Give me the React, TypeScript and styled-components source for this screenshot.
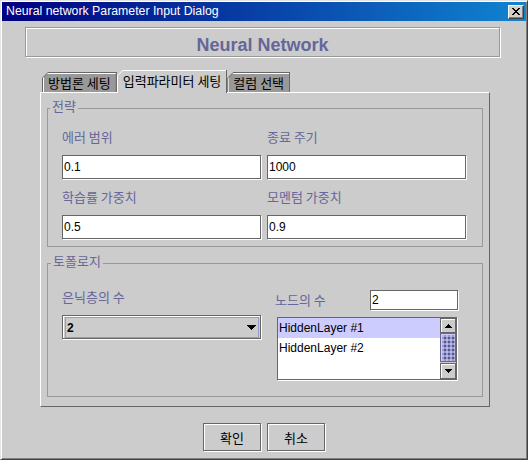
import React from "react";
import styled, { createGlobalStyle } from "styled-components";

const GlobalStyle = createGlobalStyle`
  html, body { margin: 0; padding: 0; background: #cccccc; }
  body { font-family: "Liberation Sans", "Noto Sans CJK KR", sans-serif; }
  * { box-sizing: border-box; }
`;

const KO = `"Noto Sans CJK KR", sans-serif`;

const Window = styled.div`
  width: 528px;
  height: 460px;
  background: #cccccc;
  border: 1px solid;
  border-color: #e4e4e4 #404040 #404040 #e4e4e4;
  box-shadow: inset 1px 1px 0 #ffffff, inset -1px -1px 0 #808080;
  padding: 1px;
  display: flex;
  flex-direction: column;
`;

const TitleBar = styled.div`
  height: 19px;
  flex: none;
  background: linear-gradient(to right, #000080, #1084d0);
  display: flex;
  align-items: center;
  justify-content: space-between;
  padding: 0 2px 0 4px;
`;

const TitleText = styled.span`
  color: #ffffff;
  font-size: 12.3px;
  line-height: 19px;
  white-space: nowrap;
`;

const CloseButton = styled.div`
  width: 16px;
  height: 14px;
  background: #d4d0c8;
  border: 1px solid;
  border-color: #ffffff #404040 #404040 #ffffff;
  box-shadow: inset -1px -1px 0 #808080;
  display: flex;
  align-items: center;
  justify-content: center;
  padding-right: 1px;
`;

const Header = styled.div`
  width: 475px;
  height: 30px;
  margin: 6px 0 0 23px;
  border: 1px solid #999999;
  box-shadow: inset 1px 1px 0 #ffffff, 1px 1px 0 #ffffff;
  padding-top: 7px;
  text-align: center;
  font-size: 18px;
  line-height: 21px;
  font-weight: bold;
  color: #666699;
`;

const TabbedPane = styled.div`
  margin: 13px 0 0 38px;
  width: 450px;
  display: flex;
  flex-direction: column;
`;

const TabStrip = styled.div`
  height: 22px;
  display: flex;
  align-items: flex-end;
  padding-left: 2px;
  position: relative;
  z-index: 1;
`;

const Tab = styled.div<{ $active?: boolean }>`
  height: ${(p) => (p.$active ? "23px" : "20px")};
  margin-bottom: ${(p) => (p.$active ? "-1px" : "0")};
  background: ${(p) => (p.$active ? "#ffffff" : "#666666")};
  box-shadow: inset -1px 0 0 #666666;
  padding: 1px 1px 0 1px;
  clip-path: polygon(0 6px, 6px 0, 100% 0, 100% 100%, 0 100%);
`;

const TabLabel = styled.div<{ $active?: boolean }>`
  height: 100%;
  background: ${(p) => (p.$active ? "#cccccc" : "#999999")};
  box-shadow: ${(p) => (p.$active ? "none" : "inset 1px 1px 0 #ffffff")};
  clip-path: polygon(0 5px, 5px 0, 100% 0, 100% 100%, 0 100%);
  padding: 0 5px ${(p) => (p.$active ? "3px" : "1px")} 5px;
  display: flex;
  align-items: center;
  font-family: ${KO};
  font-size: 13px;
  color: #000000;
  white-space: nowrap;
`;

const Panel = styled.div`
  height: 315px;
  border-top: 1px solid #ffffff;
  border-left: 1px solid #ffffff;
  border-right: 1px solid #666666;
  border-bottom: 1px solid #666666;
  padding: 6px 6px 0 6px;
  display: flex;
  flex-direction: column;
`;

const Group = styled.fieldset<{ $gapTop?: number; $padTop: number; $padBottom: number }>`
  margin: ${(p) => p.$gapTop ?? 0}px 0 0 0;
  padding: ${(p) => p.$padTop}px 0 ${(p) => p.$padBottom}px 0;
  border: 1px solid #999999;
  min-width: 0;
`;

const Legend = styled.legend<{ $indent: number }>`
  margin-left: ${(p) => p.$indent}px;
  padding: 0 2px 4px 2px;
  font-family: ${KO};
  font-size: 13px;
  line-height: 14px;
  color: #666699;
`;

const GroupBody = styled.div`
  padding: 0 14px;
`;

const FieldGrid = styled.div`
  display: grid;
  grid-template-columns: 199px 199px;
  column-gap: 6px;
  row-gap: 9px;
`;

const Cell = styled.div`
  display: flex;
  flex-direction: column;
`;

const Label = styled.span<{ $mb?: number }>`
  height: 18px;
  line-height: 18px;
  margin-bottom: ${(p) => p.$mb ?? 9}px;
  font-family: ${KO};
  font-size: 13px;
  color: #666699;
  white-space: nowrap;
`;

const TextField = styled.input<{ $w: number; $h: number }>`
  width: ${(p) => p.$w}px;
  height: ${(p) => p.$h}px;
  margin: 0;
  padding: 0 1px;
  border: 1px solid #666666;
  box-shadow: 1px 1px 0 #ffffff;
  background: #ffffff;
  color: #000000;
  font-family: "Liberation Sans", sans-serif;
  font-size: 12px;
  outline: none;
`;

const TopologyRow = styled.div`
  display: flex;
  gap: 13px;
`;

const LeftCol = styled.div`
  width: 200px;
  display: flex;
  flex-direction: column;
`;

const RightCol = styled.div`
  width: 183px;
  margin-top: 2px;
  display: flex;
  flex-direction: column;
`;

const NodeRow = styled.div`
  height: 20px;
  display: flex;
  align-items: center;
  justify-content: space-between;
`;

const Combo = styled.div`
  width: 199px;
  height: 24px;
  border: 1px solid #666666;
  box-shadow: 1px 1px 0 #ffffff, inset 1px 1px 0 #ffffff;
  padding: 1px 1px 0 2px;
  background: #cccccc;
`;

const ComboInner = styled.div`
  height: 21px;
  border: 1px solid #9999cc;
  display: flex;
  align-items: center;
  justify-content: space-between;
  padding: 0 2px 0 1px;
`;

const ComboValue = styled.span`
  font-family: "Liberation Sans", sans-serif;
  font-size: 12px;
  font-weight: bold;
  color: #000000;
`;

const List = styled.div`
  width: 180px;
  height: 63px;
  margin-left: 2px;
  margin-top: 7px;
  border: 1px solid #666666;
  box-shadow: 1px 1px 0 #ffffff;
  background: #ffffff;
  display: flex;
`;

const ListItems = styled.div`
  flex: 1;
  display: flex;
  flex-direction: column;
`;

const ListItem = styled.div<{ $selected?: boolean }>`
  height: 20px;
  line-height: 20px;
  padding-left: 1px;
  font-family: "Liberation Sans", sans-serif;
  font-size: 12px;
  color: #000000;
  background: ${(p) => (p.$selected ? "#ccccff" : "transparent")};
  white-space: nowrap;
`;

const ScrollBar = styled.div`
  width: 16px;
  display: flex;
  flex-direction: column;
  background: #cccccc;
`;

const ScrollButton = styled.div<{ $h: number }>`
  height: ${(p) => p.$h}px;
  flex: none;
  background: #cccccc;
  border: 1px solid #666666;
  box-shadow: inset 1px 1px 0 #ffffff;
  display: flex;
  align-items: center;
  justify-content: center;
`;

const Thumb = styled.div`
  height: 29px;
  flex: none;
  background-color: #9999cc;
  border: 1px solid #666699;
  box-shadow: inset 1px 1px 0 #ccccff;
  background-image: radial-gradient(circle, #ccccff 0.6px, transparent 0.9px),
    radial-gradient(circle, #333366 0.6px, transparent 0.9px);
  background-size: 4px 4px, 4px 4px;
  background-position: 0 0, 2px 2px;
`;

const Track = styled.div`
  flex: 1;
  background: #cccccc;
`;

const ButtonRow = styled.div`
  margin-top: 16px;
  display: flex;
  justify-content: center;
  gap: 6px;
`;

const Button = styled.div`
  width: 58px;
  height: 28px;
  border: 1px solid #666666;
  box-shadow: 1px 1px 0 #ffffff, inset 1px 1px 0 #ffffff;
  background: #cccccc;
  display: flex;
  align-items: center;
  justify-content: center;
  font-family: ${KO};
  font-size: 13px;
  color: #000000;
`;

const CloseIcon = () => (
  <svg width="8" height="7" viewBox="0 0 8 7" shapeRendering="crispEdges">
    <path d="M0 0h2v1H0zM6 0h2v1H6zM1 1h2v1H1zM5 1h2v1H5zM2 2h4v1H2zM3 3h2v1H3zM2 4h4v1H2zM1 5h2v1H1zM5 5h2v1H5zM0 6h2v1H0zM6 6h2v1H6z" fill="#000" />
  </svg>
);

const DownArrow = ({ w, h }: { w: number; h: number }) => (
  <svg width={w} height={h} viewBox={`0 0 ${w} ${h}`} shapeRendering="crispEdges">
    <polygon points={`0,0 ${w},0 ${w / 2},${h}`} fill="#000" />
  </svg>
);

const UpArrow = ({ w, h }: { w: number; h: number }) => (
  <svg width={w} height={h} viewBox={`0 0 ${w} ${h}`} shapeRendering="crispEdges">
    <polygon points={`0,${h} ${w},${h} ${w / 2},0`} fill="#000" />
  </svg>
);

export default function App() {
  return (
    <>
      <GlobalStyle />
      <Window>
        <TitleBar>
          <TitleText>Neural network Parameter Input Dialog</TitleText>
          <CloseButton>
            <CloseIcon />
          </CloseButton>
        </TitleBar>
        <Header>Neural Network</Header>
        <TabbedPane>
          <TabStrip>
            <Tab>
              <TabLabel>방법론 세팅</TabLabel>
            </Tab>
            <Tab $active>
              <TabLabel $active>입력파라미터 세팅</TabLabel>
            </Tab>
            <Tab>
              <TabLabel>컬럼 선택</TabLabel>
            </Tab>
          </TabStrip>
          <Panel>
            <Group $padTop={11} $padBottom={7}>
              <Legend $indent={2}>전략</Legend>
              <GroupBody>
                <FieldGrid>
                  <Cell>
                    <Label>에러 범위</Label>
                    <TextField $w={199} $h={24} value="0.1" readOnly />
                  </Cell>
                  <Cell>
                    <Label>종료 주기</Label>
                    <TextField $w={199} $h={24} value="1000" readOnly />
                  </Cell>
                  <Cell>
                    <Label>학습률 가중치</Label>
                    <TextField $w={199} $h={24} value="0.5" readOnly />
                  </Cell>
                  <Cell>
                    <Label>모멘텀 가중치</Label>
                    <TextField $w={199} $h={24} value="0.9" readOnly />
                  </Cell>
                </FieldGrid>
              </GroupBody>
            </Group>
            <Group $gapTop={7} $padTop={16} $padBottom={16}>
              <Legend $indent={3}>토폴로지</Legend>
              <GroupBody>
                <TopologyRow>
                  <LeftCol>
                    <Label>은닉층의 수</Label>
                    <Combo>
                      <ComboInner>
                        <ComboValue>2</ComboValue>
                        <DownArrow w={10} h={5} />
                      </ComboInner>
                    </Combo>
                  </LeftCol>
                  <RightCol>
                    <NodeRow>
                      <Label $mb={0}>노드의 수</Label>
                      <TextField $w={88} $h={20} value="2" readOnly />
                    </NodeRow>
                    <List>
                      <ListItems>
                        <ListItem $selected>HiddenLayer #1</ListItem>
                        <ListItem>HiddenLayer #2</ListItem>
                      </ListItems>
                      <ScrollBar>
                        <ScrollButton $h={15}>
                          <UpArrow w={8} h={4} />
                        </ScrollButton>
                        <Thumb />
                        <Track />
                        <ScrollButton $h={16}>
                          <DownArrow w={8} h={4} />
                        </ScrollButton>
                      </ScrollBar>
                    </List>
                  </RightCol>
                </TopologyRow>
              </GroupBody>
            </Group>
          </Panel>
        </TabbedPane>
        <ButtonRow>
          <Button>확인</Button>
          <Button>취소</Button>
        </ButtonRow>
      </Window>
    </>
  );
}
